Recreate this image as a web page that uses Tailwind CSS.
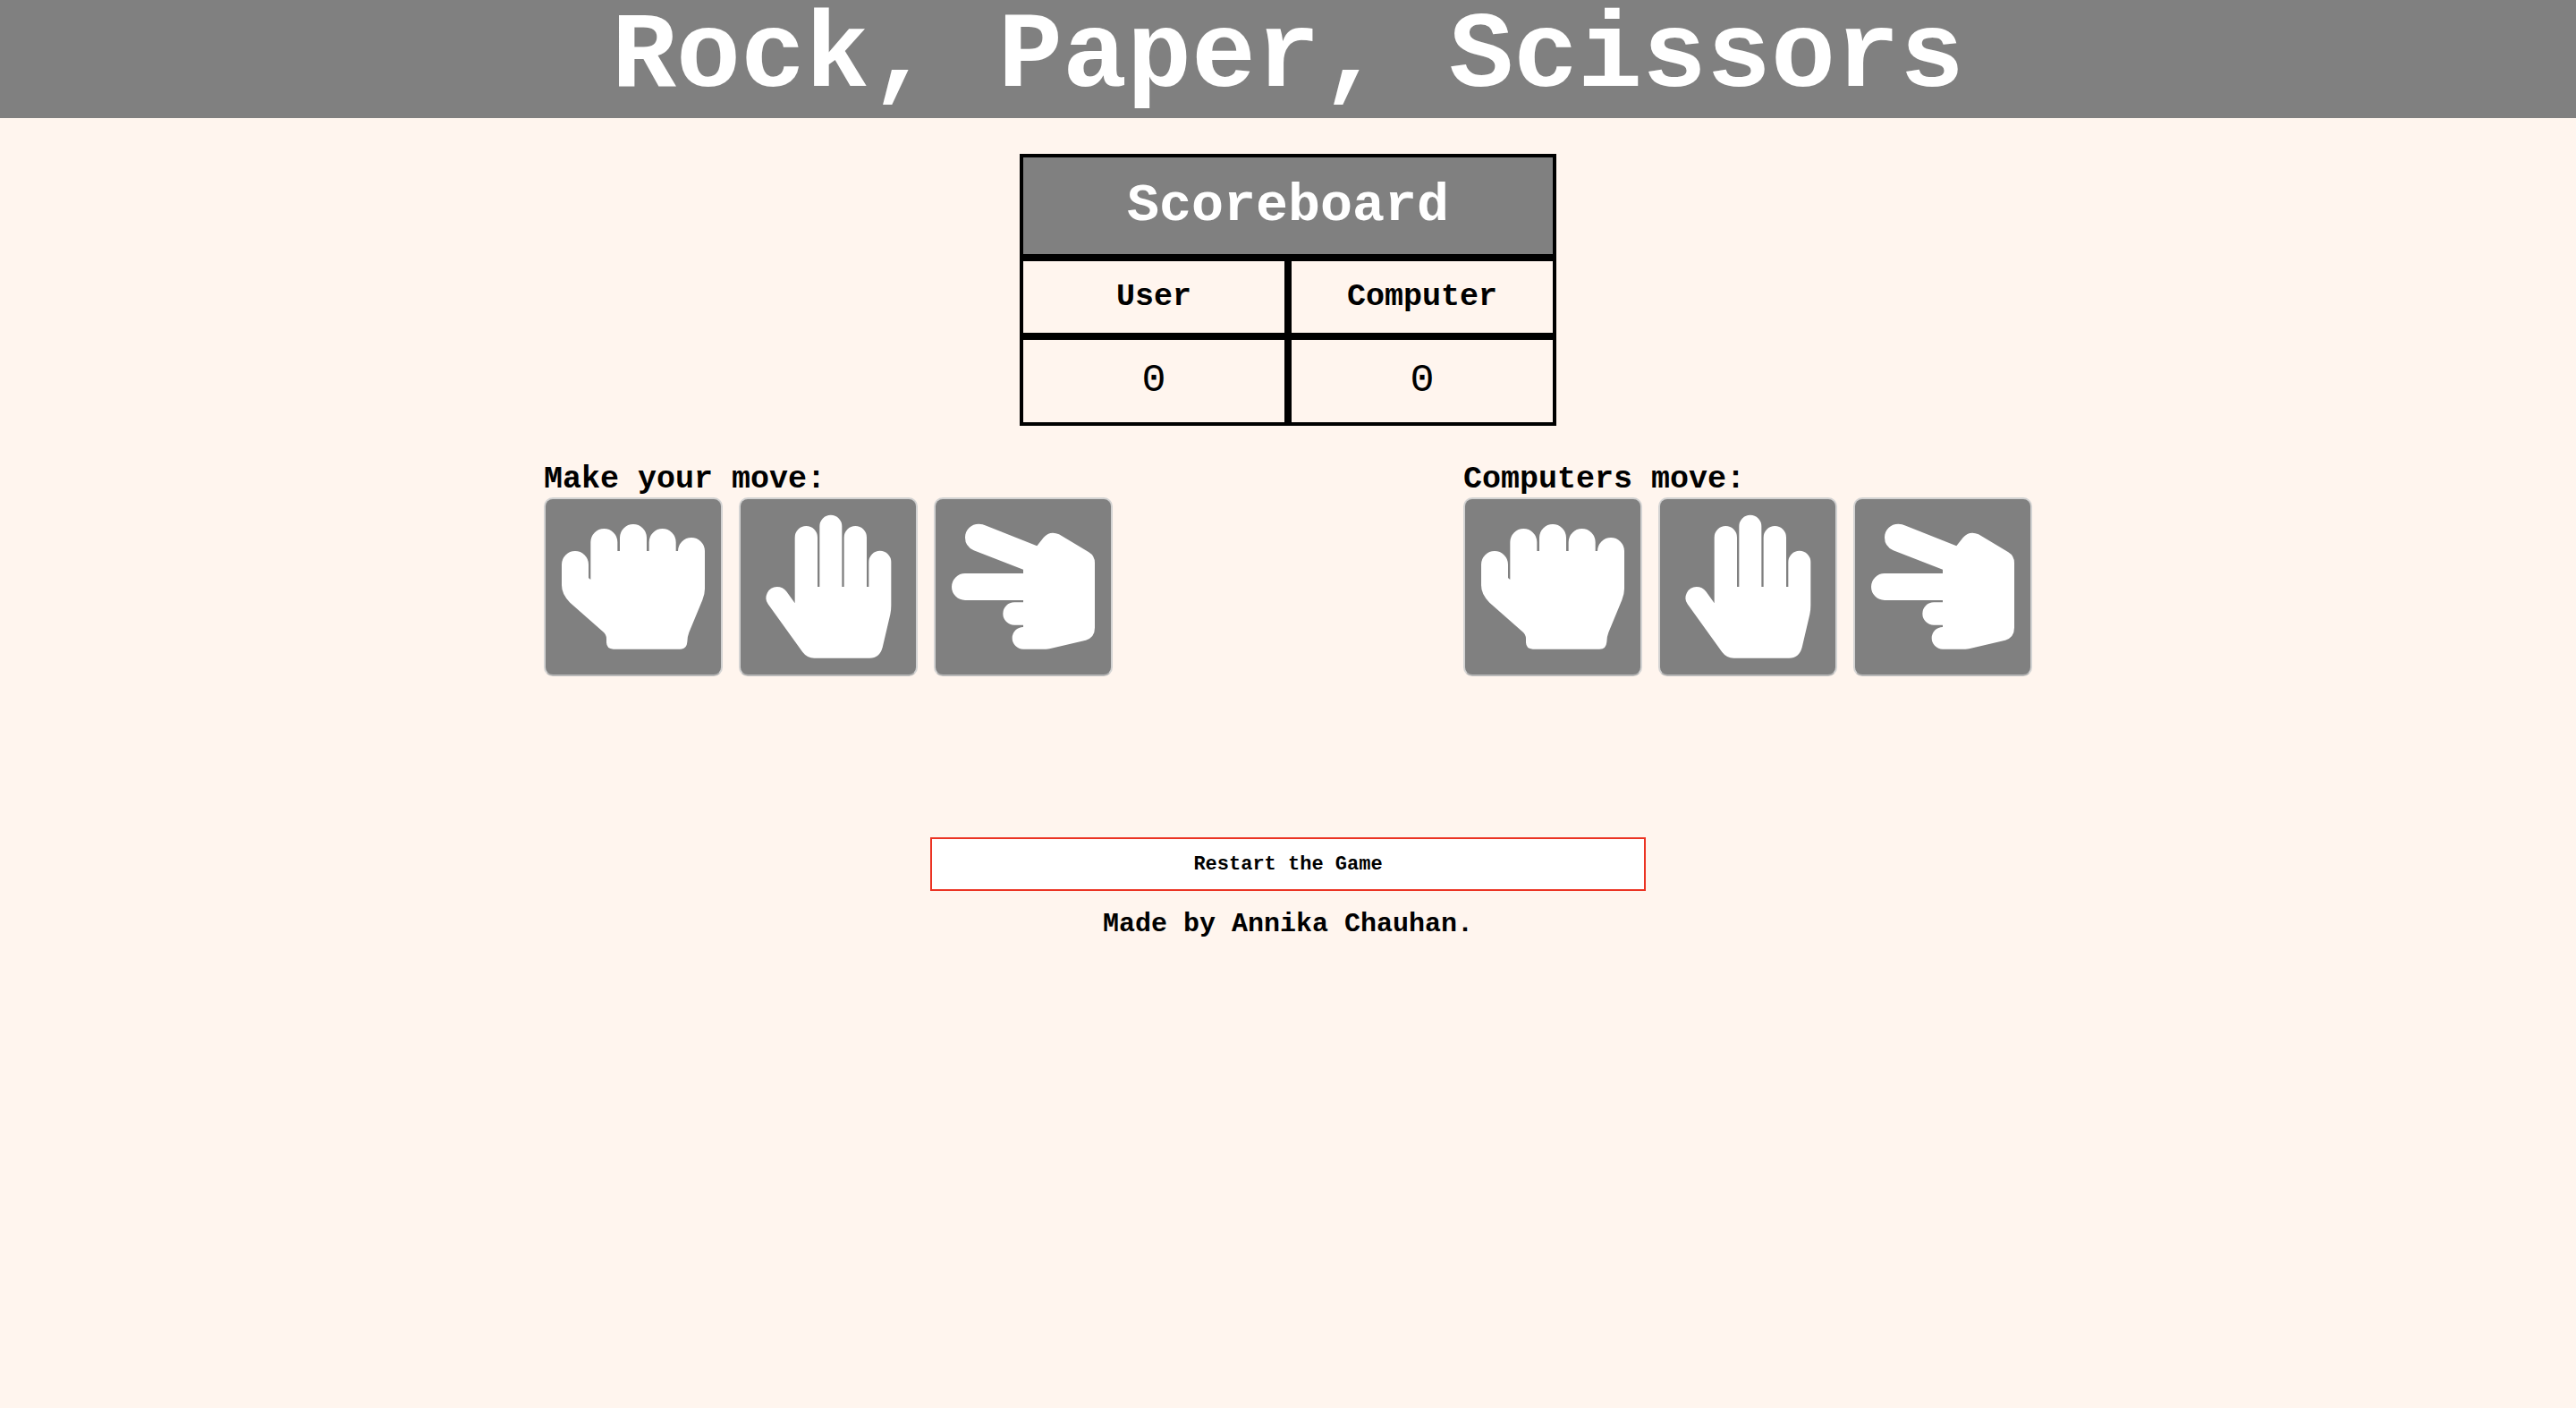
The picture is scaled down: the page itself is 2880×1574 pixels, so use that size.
<!DOCTYPE html>
<html lang="en">
<head>
<meta charset="utf-8">
<meta name="viewport" content="width=device-width, initial-scale=1">
<title>Rock, Paper, Scissors</title>
<script src="https://cdn.jsdelivr.net/npm/@tailwindcss/browser@4"></script>
</head>
<body class="min-h-screen bg-[#fff5ee] font-['Liberation_Mono',monospace] text-black">
  <!-- Shared hand icons -->
  <svg class="hidden" aria-hidden="true">
    <symbol id="rock" viewBox="30 24 588 588">
      <path d="M84 243A45 45 0 0 1 174 243V287Q176 292 181 293V168A45 45 0 0 1 271 168V198H279V153A45 45 0 0 1 369 153V198H377V168A45 45 0 0 1 467 168V198H474A45 45 0 0 1 564 198V325Q564 343 556 362L511 471Q505 486 505 503Q503 527 481 527H257Q235 527 234 505V492Q234 477 221 467L112 371Q84 344 84 313Z"/>
    </symbol>
    <symbol id="paper" viewBox="24 24 588 588">
      <path d="M116 376A37 37 0 0 1 146 318Q166 318 178 334L206 373V152A38 38 0 0 1 282 152V318H289V115A37 37 0 0 1 364 115V318H371V152A38 38 0 0 1 447 152V318H454V235A37 37 0 0 1 529 235V380Q529 395 526 410L500 521Q490 557 457 557H271Q247 557 232 537Z"/>
    </symbol>
    <symbol id="scissors" viewBox="18 24 588 588">
      <path d="M358 181L380 153Q402 128 432 142L532 202Q552 214 552 238V455Q552 487 522 497L400 526Q395 527 388 527H312A37 37 0 0 1 312 453V446H282A38 38 0 0 1 282 370H312V363H117A45 45 0 0 1 117 273H312V260L146 196Q117 182 117 153C117 125 138 107 163 107Q176 107 188 113Z"/>
    </symbol>
  </svg>

  <header class="bg-[#808080] pb-1 text-center text-white">
    <h1 class="text-[120px] leading-[128px] font-bold">Rock, Paper, Scissors</h1>
  </header>

  <main>
    <table class="mx-auto mt-10 w-[600px] table-fixed border-separate border-spacing-0 text-center">
      <thead>
        <tr><th colspan="2" class="border-4 border-black bg-[#808080] p-5 text-[60px] leading-[68px] font-bold text-white">Scoreboard</th></tr>
        <tr class="text-[35px] leading-10">
          <th scope="col" class="border-4 border-black p-5 font-bold">User</th>
          <th scope="col" class="border-4 border-black p-5 font-bold">Computer</th>
        </tr>
      </thead>
      <tbody>
        <tr class="text-[45px] leading-[52px]">
          <td class="border-4 border-black p-5">0</td>
          <td class="border-4 border-black p-5">0</td>
        </tr>
      </tbody>
    </table>

    <div class="mx-auto mt-10 flex max-w-[1664px] flex-wrap justify-between gap-y-10">
      <section aria-labelledby="user-move">
        <h2 id="user-move" class="text-[35px] leading-10 font-bold">Make your move:</h2>
        <div class="flex gap-[18px]">
          <button type="button" aria-label="Rock" class="size-[200px] rounded-[10px] border-2 border-[#d3d3d3] border-b-[#b8b8b8] bg-[#808080] fill-white"><svg class="size-full"><use href="#rock"/></svg></button>
          <button type="button" aria-label="Paper" class="size-[200px] rounded-[10px] border-2 border-[#d3d3d3] border-b-[#b8b8b8] bg-[#808080] fill-white"><svg class="size-full"><use href="#paper"/></svg></button>
          <button type="button" aria-label="Scissors" class="size-[200px] rounded-[10px] border-2 border-[#d3d3d3] border-b-[#b8b8b8] bg-[#808080] fill-white"><svg class="size-full"><use href="#scissors"/></svg></button>
        </div>
      </section>
      <section aria-labelledby="computer-move">
        <h2 id="computer-move" class="text-[35px] leading-10 font-bold">Computers move:</h2>
        <div class="flex gap-[18px]">
          <button type="button" aria-label="Rock" class="size-[200px] rounded-[10px] border-2 border-[#d3d3d3] border-b-[#b8b8b8] bg-[#808080] fill-white"><svg class="size-full"><use href="#rock"/></svg></button>
          <button type="button" aria-label="Paper" class="size-[200px] rounded-[10px] border-2 border-[#d3d3d3] border-b-[#b8b8b8] bg-[#808080] fill-white"><svg class="size-full"><use href="#paper"/></svg></button>
          <button type="button" aria-label="Scissors" class="size-[200px] rounded-[10px] border-2 border-[#d3d3d3] border-b-[#b8b8b8] bg-[#808080] fill-white"><svg class="size-full"><use href="#scissors"/></svg></button>
        </div>
      </section>
    </div>

    <button type="button" class="mx-auto mt-[180px] block h-[60px] w-full max-w-[800px] border-2 border-[#eb3323] bg-white text-[22px] font-bold">Restart the Game</button>
  </main>

  <footer class="mt-5 text-center text-[30px] leading-[34px] font-bold">Made by Annika Chauhan.</footer>
</body>
</html>
